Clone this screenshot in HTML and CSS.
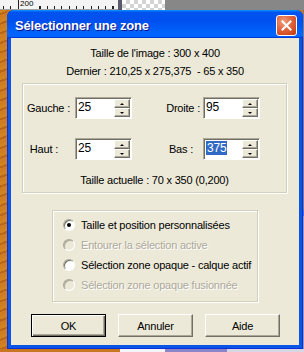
FILE: index.html
```html
<!DOCTYPE html>
<html lang="fr">

<head>
    <meta charset="UTF-8">
    <title>Sélectionner une zone</title>
    <link rel="stylesheet" href="styles.css">
</head>

<body>
    <div class="topbar">
        <div class="ruler"><span class="ruler-num">200</span></div>
        <div class="canvas-edge"></div>
        <div class="checker"></div>
        <div class="workspace"></div>
    </div>
    <div class="middle">
        <div class="wood"></div>
        <div class="window">
            <div class="titlebar">
                <span class="title">Sélectionner une zone</span>
                <span class="close">
                    <svg width="11" height="11" viewBox="0 0 11 11">
                        <path d="M1.5 1.5 L9.5 9.5 M9.5 1.5 L1.5 9.5" stroke="#fff" stroke-width="2" stroke-linecap="square" />
                    </svg>
                </span>
            </div>
            <div class="dialog">
                <p class="info first">Taille de l'image : 300 x 400</p>
                <p class="info">Dernier : 210,25 x 275,375&nbsp; - 65 x 350</p>

                <div class="group coords">
                    <div class="coord-grid">
                        <label class="lbl lbl-gauche">Gauche :</label>
                        <div class="spin">
                            <span class="spin-text">25</span>
                            <span class="spin-btns"><span class="up"></span><span class="down"></span></span>
                        </div>
                        <label class="lbl lbl-droite">Droite :</label>
                        <div class="spin">
                            <span class="spin-text">95</span>
                            <span class="spin-btns"><span class="up"></span><span class="down"></span></span>
                        </div>

                        <label class="lbl lbl-haut">Haut :</label>
                        <div class="spin">
                            <span class="spin-text">25</span>
                            <span class="spin-btns"><span class="up"></span><span class="down"></span></span>
                        </div>
                        <label class="lbl lbl-bas">Bas :</label>
                        <div class="spin">
                            <span class="spin-text"><span class="selected">375</span></span>
                            <span class="spin-btns"><span class="up"></span><span class="down"></span></span>
                        </div>
                    </div>
                    <p class="info current">Taille actuelle : 70 x 350 (0,200)</p>
                </div>

                <div class="group options">
                    <div class="option"><span class="radio checked"></span>Taille et position personnalisées</div>
                    <div class="option disabled"><span class="radio"></span>Entourer la sélection active</div>
                    <div class="option"><span class="radio"></span>Sélection zone opaque - calque actif</div>
                    <div class="option disabled"><span class="radio"></span>Sélection zone opaque fusionnée</div>
                </div>

                <div class="buttons">
                    <span class="btn default">OK</span>
                    <span class="btn">Annuler</span>
                    <span class="btn">Aide</span>
                </div>
            </div>
        </div>
        <div class="side"></div>
    </div>
    <div class="bottombar">
        <div class="bottom-wood"></div>
        <div class="bottom-white"></div>
        <div class="bottom-lilac"></div>
        <div class="bottom-rest"></div>
    </div>
</body>

</html>
```

FILE: styles.css
```css
body {
    margin: 0px;
    width: 304px;
    height: 352px;
    overflow: hidden;
    background: #c8761f;
    font-family: "Liberation Sans", sans-serif;
    font-size: 11px;
    letter-spacing: -0.2px;
    color: #000;
}

p {
    margin: 0px;
}

/* desktop behind the dialog */
.topbar {
    height: 10px;
    display: flex;
    background: #8a8a8a;
}

.ruler {
    width: 118px;
    height: 9px;
    background-color: #f4f4f4;
    background-image: repeating-linear-gradient(90deg, #222 0 1px, transparent 1px 7.3px);
    background-size: 100% 3px;
    background-position: 3px bottom;
    background-repeat: no-repeat;
    border-bottom: 1px solid #a0a0a0;
}

.ruler-num {
    display: block;
    margin-left: 18px;
    padding-left: 1px;
    border-left: 1px solid #222;
    height: 9px;
    font-size: 8px;
    line-height: 7px;
    letter-spacing: 0px;
    width: 14px;
    background: #f4f4f4;
}

.canvas-edge {
    width: 4px;
    background: #5a5a6a;
}

.checker {
    width: 43px;
    background-color: #fff;
    background-image:
        linear-gradient(45deg, #d4d4d4 25%, transparent 25%, transparent 75%, #d4d4d4 75%),
        linear-gradient(45deg, #d4d4d4 25%, transparent 25%, transparent 75%, #d4d4d4 75%);
    background-size: 8px 8px;
    background-position: 0 0, 4px 4px;
}

.workspace {
    flex: 1;
    background: #878787;
}

.middle {
    display: flex;
    height: 339px;
}

.wood {
    width: 7px;
    background: repeating-linear-gradient(160deg, #d2821f 0 3px, #b9661a 3px 5px, #cf7c22 5px 9px);
}

.side {
    flex: 1;
    background: linear-gradient(#7b7b86 0 200px, #3d6be0 200px 206px, #8e97b8 206px);
}

.bottombar {
    height: 3px;
    display: flex;
}

.bottom-wood {
    width: 120px;
    background: #c8761f;
}

.bottom-white {
    width: 45px;
    background: #f4f4f8;
}

.bottom-lilac {
    width: 62px;
    background: #8c86c8;
}

.bottom-rest {
    flex: 1;
    background: #d8d6e4;
}

/* window frame */
.window {
    width: 296px;
    display: flex;
    flex-direction: column;
    background: #0a55e6;
    border-radius: 7px 7px 0 0;
    box-shadow: inset 0 0 0 1px #0831d9;
}

.titlebar {
    height: 28px;
    display: flex;
    align-items: center;
    justify-content: space-between;
    padding: 0px 6px 0px 8px;
    border-radius: 7px 7px 0 0;
    background: linear-gradient(180deg, #0997ff, #0053ee 8%, #0050ee 40%, #0066ff 88%, #0066ff 93%, #005bff 95%, #003dd7 96%, #003dd7);
}

.title {
    font-weight: bold;
    font-size: 13px;
    color: #fff;
    letter-spacing: -0.2px;
    text-shadow: 1px 1px #0f1089;
    padding-top: 2px;
}

.close {
    width: 19px;
    height: 19px;
    margin-top: 2px;
    display: flex;
    align-items: center;
    justify-content: center;
    border: 1px solid #fff;
    border-radius: 3px;
    background: radial-gradient(circle at 35% 30%, #f0a080 0, #e0643c 45%, #c23a10 100%);
}

.dialog {
    flex: 1;
    margin: 0px 4px 4px;
    background: #ece9d8;
    display: flex;
    flex-direction: column;
}

.info {
    text-align: center;
    line-height: 18px;
}

.info.first {
    margin-top: 6px;
}

/* group boxes */
.group {
    border: 1px solid #d0d0bf;
    box-shadow: inset 1px 1px #fff, 1px 1px #fff;
    box-sizing: border-box;
}

.coords {
    width: 265px;
    height: 110px;
    margin: 3px 0px 0px 11px;
    padding-top: 13px;
}

.coord-grid {
    display: grid;
    grid-template-columns: 52px 57px 71px 57px;
    row-gap: 19px;
    align-items: center;
}

.lbl {
    text-align: right;
}

.lbl-gauche {
    padding-right: 5px;
}

.lbl-haut {
    padding-right: 17px;
}

.lbl-droite {
    padding-right: 3px;
}

.lbl-bas {
    padding-right: 10px;
}

.spin {
    height: 22px;
    box-sizing: border-box;
    display: flex;
    border: 1px solid;
    border-color: #aca899 #fff #fff #aca899;
    box-shadow: inset 1px 1px #716f64;
    background: #fff;
    padding: 1px;
}

.spin-text {
    flex: 1;
    padding: 2px 0px 0px 1px;
    line-height: 13px;
    font-size: 12px;
}

.selected {
    background: #316ac5;
    color: #fff;
    padding: 0px 1px;
}

.spin-btns {
    width: 16px;
    display: flex;
    flex-direction: column;
}

.spin-btns span {
    flex: 1;
    display: flex;
    align-items: center;
    justify-content: center;
    background: #ece9d8;
    border: 1px solid;
    border-color: #fff #716f64 #716f64 #fff;
    box-shadow: inset -1px -1px #aca899;
}

.spin-btns .up::after {
    content: "";
    border-left: 2px solid transparent;
    border-right: 2px solid transparent;
    border-bottom: 2px solid #000;
}

.spin-btns .down::after {
    content: "";
    border-left: 2px solid transparent;
    border-right: 2px solid transparent;
    border-top: 2px solid #000;
}

.current {
    margin-top: 11px;
}

.options {
    width: 206px;
    height: 92px;
    margin: 17px 0px 0px 41px;
    padding: 4px 0px 0px 10px;
}

.option {
    height: 20px;
    display: flex;
    align-items: center;
    white-space: nowrap;
}

.option.disabled {
    color: #aca899;
    text-shadow: 1px 1px #fff;
}

.radio {
    width: 12px;
    height: 12px;
    box-sizing: border-box;
    border-radius: 50%;
    margin-right: 6px;
    border: 1px solid;
    border-color: #aca899 #fff #fff #aca899;
    box-shadow: inset 1px 1px #716f64;
    background: #fff;
    display: flex;
    align-items: center;
    justify-content: center;
}

.disabled .radio {
    background: #ece9d8;
    box-shadow: inset 1px 1px #aca899;
}

.radio.checked::after {
    content: "";
    width: 4px;
    height: 4px;
    border-radius: 50%;
    background: #000;
}

/* bottom buttons */
.buttons {
    display: flex;
    justify-content: center;
    gap: 12px;
    margin-top: 12px;
    padding-left: 1px;
}

.btn {
    width: 75px;
    height: 23px;
    box-sizing: border-box;
    display: flex;
    align-items: center;
    justify-content: center;
    background: #ece9d8;
    border: 1px solid;
    border-color: #fff #716f64 #716f64 #fff;
    box-shadow: inset -1px -1px #aca899;
}

.btn.default {
    border-color: #000;
    box-shadow: inset 1px 1px #fff, inset -1px -1px #716f64, inset -2px -2px #aca899;
}
```
